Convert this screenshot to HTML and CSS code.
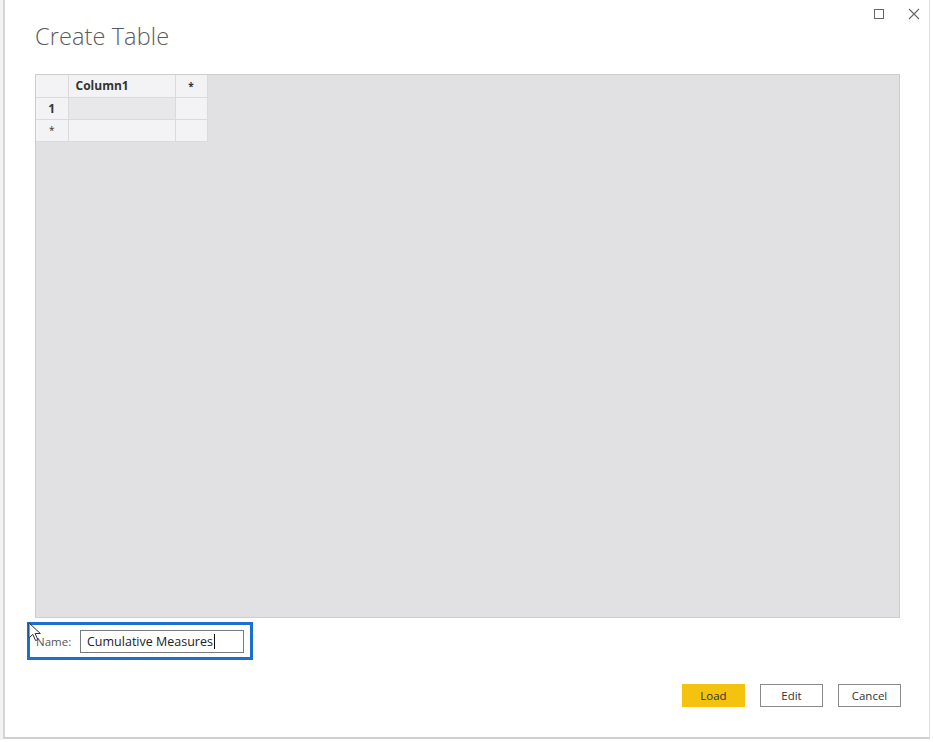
FILE: index.html
```html
<!DOCTYPE html>
<html>
<head>
<meta charset="utf-8">
<link rel="stylesheet" href="styles.css">
</head>
<body>
<div class="page">
  <div class="edge"></div>
  <div class="dialog">
    <div class="header">
      <h1 class="title">Create Table</h1>
      <div class="controls">
        <svg class="ctl" width="12" height="12" viewBox="0 0 12 12"><rect x="1.5" y="1.5" width="9" height="9" fill="none" stroke="#666" stroke-width="1"/></svg>
        <svg class="ctl" width="12" height="12" viewBox="0 0 12 12"><path d="M1 1L11 11M11 1L1 11" stroke="#666" stroke-width="1.1" fill="none"/></svg>
      </div>
    </div>
    <div class="gridarea">
      <table class="grid">
        <tr class="hrow"><td class="rh"></td><td class="c1 hd">Column1</td><td class="star hd">*</td></tr>
        <tr><td class="rh">1</td><td class="c1 sel"></td><td class="star"></td></tr>
        <tr><td class="rh small">*</td><td class="c1"></td><td class="star"></td></tr>
      </table>
    </div>
    <div class="namebox">
      <span class="label">Name:</span>
      <div class="input">Cumulative Measures<span class="caret"></span></div>
      <svg class="cursor" width="16" height="22" viewBox="0 0 16 22"><path d="M1 1L1 16L4.8 12.3L7.6 18.6L9.8 17.6L7.1 11.5L12.4 11.5Z" fill="#fff" stroke="#333" stroke-width="1"/></svg>
    </div>
    <div class="buttons">
      <button class="btn primary">Load</button>
      <button class="btn">Edit</button>
      <button class="btn">Cancel</button>
    </div>
  </div>
</div>
</body>
</html>
```
FILE: styles.css
```css
html, body { margin: 0; padding: 0; background: #ffffff; }
body { font-family: "Open Sans", "Noto Sans", sans-serif; color: #222; }
.page { display: flex; width: 933px; height: 742px; overflow: hidden; }
.edge { width: 3px; height: 740px; background: #f2f2f2; }
.dialog {
  width: 927px; height: 739px; box-sizing: border-box;
  border-left: 2px solid #d4d4d4; border-right: 1px solid #dcdcdc; border-bottom: 2px solid #cfcfcf;
  background: #fff; padding: 0 29px 0 30px;
  display: flex; flex-direction: column;
}
.header { display: flex; justify-content: space-between; align-items: flex-start; height: 74px; }
.title { margin: 20px 0 0 0; font-weight: 300; font-size: 23.5px; color: #5a5a5a; letter-spacing: 0.1px; }
.controls { display: flex; gap: 23px; margin-top: 8px; margin-right: -20px; }
.ctl { display: block; }
.gridarea {
  height: 544px; box-sizing: border-box; border: 1px solid #cdcdcd; background: #e1e0e2;
}
.grid { border-collapse: collapse; font-size: 12px; background: #f3f3f5; color: #333; }
.grid td { border: 1px solid #dadada; height: 22px; padding: 0; box-sizing: border-box; }
.grid tr:first-child td { border-top: none; }
.grid td:first-child { border-left: none; }
.rh { width: 32px; text-align: center; font-weight: 700; color: #333; }
.rh.small { font-size: 10px; font-weight: 400; color: #333; }
.c1 { width: 107px; }
.hd { font-weight: 700; color: #333; }
.c1.hd { padding-left: 7px; }
.star { width: 32px; text-align: center; font-size: 10px; color: #333; }
.sel { background: #e8e8ea; }
.namebox {
  position: relative;
  margin: 4px 0 0 -8px; width: 226px; height: 38px; box-sizing: border-box;
  border: 3px solid #1a6fcf; display: flex; align-items: center;
}
.label { font-size: 11.5px; color: #555; margin-left: 6px; width: 44px; }
.input {
  width: 164px; height: 23px; box-sizing: border-box; border: 1px solid #7a7a7a;
  font-size: 12.5px; line-height: 21px; padding-left: 6px; color: #222; display: flex; align-items: center;
}
.caret { display: inline-block; width: 1px; height: 15px; background: #111; margin-left: 1px; }
.cursor { position: absolute; left: -2px; top: -3px; }
.buttons { display: flex; justify-content: flex-end; gap: 15px; margin-top: 24px; margin-right: -1px; }
.btn {
  width: 63px; height: 23px; box-sizing: border-box; border: 1px solid #8a8a8a; background: #fff;
  font-family: "Open Sans", "Noto Sans", sans-serif; font-size: 11.5px; color: #333; padding: 0;
}
.btn.primary { background: #f5c20e; border-color: #f5c20e; color: #333; }
```
